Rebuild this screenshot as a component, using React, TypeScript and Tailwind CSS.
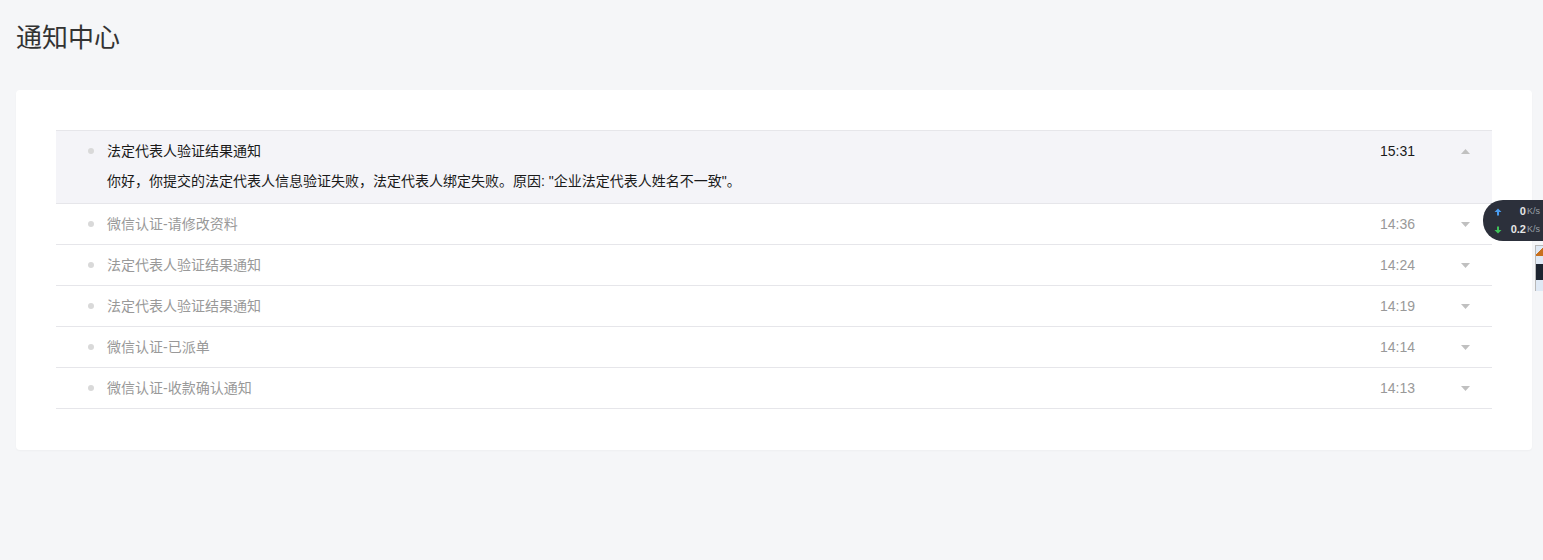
import { useState } from "react";

type Notice = {
  id: number;
  title: string;
  time: string;
  content: string;
};

const notices: Notice[] = [
  {
    id: 1,
    title: "法定代表人验证结果通知",
    time: "15:31",
    content: "你好，你提交的法定代表人信息验证失败，法定代表人绑定失败。原因: \"企业法定代表人姓名不一致\"。",
  },
  { id: 2, title: "微信认证-请修改资料", time: "14:36", content: "" },
  { id: 3, title: "法定代表人验证结果通知", time: "14:24", content: "" },
  { id: 4, title: "法定代表人验证结果通知", time: "14:19", content: "" },
  { id: 5, title: "微信认证-已派单", time: "14:14", content: "" },
  { id: 6, title: "微信认证-收款确认通知", time: "14:13", content: "" },
];

function Caret({ up }: { up: boolean }) {
  return (
    <svg width="9" height="5" viewBox="0 0 9 5" className="fill-[#c0c0c0]">
      {up ? <path d="M4.5 0L9 5H0z" /> : <path d="M0 0h9L4.5 5z" />}
    </svg>
  );
}

function Arrow({ down, color }: { down?: boolean; color: string }) {
  return (
    <svg width="8" height="8" viewBox="0 0 8 8" className={down ? "rotate-180" : ""}>
      <path d="M4 0.5L7.5 4H5v3.5H3V4H0.5z" fill={color} />
    </svg>
  );
}

function SpeedWidget() {
  return (
    <div className="absolute right-0 top-[200px] z-10">
      <div className="flex h-[41px] w-[60px] flex-col justify-center gap-[7px] rounded-l-[20px] bg-[#2c303b] pl-[11px] pr-[3px] font-['Liberation_Sans',sans-serif] leading-none">
        <div className="flex items-center">
          <Arrow color="#4a9cf0" />
          <span className="ml-auto text-[11px] font-bold text-[#e6e6e6]">0</span>
          <span className="ml-[1px] text-[9px] text-[#9aa0aa]">K/s</span>
        </div>
        <div className="flex items-center">
          <Arrow down color="#3fc35a" />
          <span className="ml-auto text-[11px] font-bold text-[#e6e6e6]">0.2</span>
          <span className="ml-[1px] text-[9px] text-[#9aa0aa]">K/s</span>
        </div>
      </div>
      <div className="ml-[52px] mt-[4px] flex h-[46px] w-[8px] flex-col border-l border-t border-[#b8b8b8] bg-[#dfe9f5]">
        <div className="h-[10px] bg-[linear-gradient(135deg,transparent_50%,#c8701e_50%)]" />
        <div className="mt-[8px] h-[16px] bg-[#1d2430]" />
      </div>
    </div>
  );
}

export default function App() {
  const [openId, setOpenId] = useState<number>(1);

  return (
    <div className="relative min-h-[560px] bg-[#f5f6f8] pl-4 pr-[11px] pt-[19px] font-['Liberation_Sans','Noto_Sans_CJK_SC',sans-serif]">
      <h1 className="text-[26px] leading-[38px] text-[#333]">通知中心</h1>

      <div className="mt-[33px] rounded-[4px] bg-white px-10 pb-[41px] pt-10 shadow-[0_1px_2px_rgba(0,0,0,0.03)]">
        <ul className="border-t border-[#e6e6ea]">
          {notices.map((n) => {
            const open = openId === n.id;
            return (
              <li
                key={n.id}
                className={`border-b border-[#e6e6ea] ${open ? "bg-[#f4f4f8]" : "bg-white"}`}
              >
                <button
                  onClick={() => setOpenId(open ? 0 : n.id)}
                  className="flex h-10 w-full items-center text-left"
                >
                  <span className="ml-[32px] h-[6px] w-[6px] rounded-full bg-[#d9d9d9]" />
                  <span className={`ml-[13px] flex-1 text-[14px] ${open ? "text-[#1a1a1a]" : "text-[#999]"}`}>
                    {n.title}
                  </span>
                  <span className={`text-[14px] ${open ? "text-[#1a1a1a]" : "text-[#999]"}`}>{n.time}</span>
                  <span className="ml-[46px] mr-[22px] flex w-[9px] items-center">
                    <Caret up={open} />
                  </span>
                </button>
                {open && (
                  <p className="-mt-[1px] pb-[11px] pl-[51px] text-[14px] leading-[22px] text-[#1a1a1a]">
                    {n.content}
                  </p>
                )}
              </li>
            );
          })}
        </ul>
      </div>

      <SpeedWidget />
    </div>
  );
}
